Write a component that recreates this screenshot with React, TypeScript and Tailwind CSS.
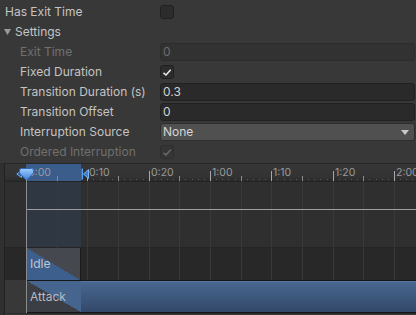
import type { ReactNode } from "react";

const STEP = 61.33;
const T0 = 21;
const LABELS = ["0:00", "0:10", "0:20", "1:00", "1:10", "1:20", "2:00"];
const px = (v: number) => Math.round(T0 + v);

function Check({ on, disabled }: { on?: boolean; disabled?: boolean }) {
  return (
    <div
      className={
        "flex h-[14px] w-[14px] items-center justify-center rounded-[3px] border " +
        (disabled ? "border-[#2e2e2e] bg-[#353535]" : "border-[#202020] bg-[#2c2c2c]")
      }
    >
      {on && (
        <svg width="10" height="9" viewBox="0 0 10 9">
          <polyline
            points="1.5,4.8 4,7 8.7,1.8"
            fill="none"
            stroke={disabled ? "#6a6a6a" : "#e8e8e8"}
            strokeWidth="1.6"
          />
        </svg>
      )}
    </div>
  );
}

function Field({ value, disabled }: { value: string; disabled?: boolean }) {
  return (
    <div
      className={
        "flex h-[18px] flex-1 items-center rounded-[3px] border px-[2px] " +
        (disabled
          ? "border-[#2c2c2c] bg-[#323232] text-[#6c6c6c]"
          : "border-[#212121] bg-[#2a2a2a] text-[#d2d2d2]")
      }
    >
      {value}
    </div>
  );
}

function Row({
  label,
  indent = true,
  disabled,
  children,
}: {
  label: ReactNode;
  indent?: boolean;
  disabled?: boolean;
  children?: ReactNode;
}) {
  return (
    <div className="flex h-5 items-center">
      <div
        className={
          "w-[160px] shrink-0 truncate " +
          (indent ? "pl-[20px] " : "pl-[5px] ") +
          (disabled ? "text-[#707070]" : "text-[#c4c4c4]")
        }
      >
        {label}
      </div>
      <div className="flex flex-1 items-center pr-[1px]">{children}</div>
    </div>
  );
}

function Ruler() {
  const small = Array.from({ length: 66 }, (_, i) => i * (STEP / 10));
  return (
    <div className="relative h-[18px] border-t border-[#262626] bg-[linear-gradient(to_bottom,#363636_0%,#333333_75%,#2a2a2a_100%)]">
      <div className="absolute top-0 bottom-0 left-[21px] w-[55px] bg-[#3b5d8c]" />
      {small.map((v, i) => (
        <div
          key={"s" + i}
          className="absolute bottom-[1px] h-px w-px bg-[#5c5c5c]"
          style={{ left: px(v) }}
        />
      ))}
      {LABELS.map((l, i) => (
        <div key={l}>
          <div
            className="absolute bottom-0 h-[10px] w-px bg-[#a8a8a8]"
            style={{ left: px(i * STEP) }}
          />
          <div
            className="absolute bottom-0 h-[5px] w-px bg-[#8a8a8a]"
            style={{ left: px(i * STEP + STEP / 2) }}
          />
          <div
            className="absolute top-[3px] text-[10.5px] leading-[12px] text-[#9a9a9a]"
            style={{ left: px(i * STEP) + 2 }}
          >
            {l}
          </div>
        </div>
      ))}
      {/* transition start marker */}
      <svg className="absolute top-[6px] left-[11px]" width="6" height="8" viewBox="0 0 6 8">
        <polygon points="5.5,0.5 0.8,4 5.5,7.5" fill="#2f5f9c" stroke="#6aa8f0" strokeWidth="1" />
      </svg>
      {/* transition end marker */}
      <svg className="absolute top-[4px] left-[76px]" width="8" height="12" viewBox="0 0 8 12">
        <rect x="0.5" y="0.5" width="1.5" height="11" fill="#5fa0ee" />
        <polygon points="2.5,6 7.5,1.5 7.5,10.5" fill="#3f7fd0" stroke="#7ab6f6" strokeWidth="1" />
      </svg>
      {/* playhead */}
      <svg className="absolute top-[4px] left-[14px]" width="15" height="13" viewBox="0 0 15 13">
        <defs>
          <linearGradient id="ph" x1="0" y1="0" x2="0" y2="1">
            <stop offset="0" stopColor="#9cccff" />
            <stop offset="1" stopColor="#3c7fd8" />
          </linearGradient>
        </defs>
        <path
          d="M2.5 0.5 H12.5 Q14.5 0.5 14.5 2.5 V5 L7.5 12.5 L0.5 5 V2.5 Q0.5 0.5 2.5 0.5 Z"
          fill="url(#ph)"
          stroke="#2f68b8"
          strokeWidth="1"
        />
      </svg>
    </div>
  );
}

export default function App() {
  const grid = Array.from({ length: 13 }, (_, i) => i * (STEP / 2)).slice(1);
  return (
    <div className="h-[315px] w-[416px] overflow-hidden bg-[#383838] font-['Inter',sans-serif] text-[12px]">
      <div className="pt-[2px]">
        <Row label="Has Exit Time" indent={false}>
          <Check />
        </Row>
        <div className="flex h-5 items-center text-[#c4c4c4]">
          <svg className="ml-[4px] mr-[4px]" width="7" height="6" viewBox="0 0 7 6">
            <polygon points="0,0 7,0 3.5,6" fill="#9a9a9a" />
          </svg>
          Settings
        </div>
        <Row label="Exit Time" disabled>
          <Field value="0" disabled />
        </Row>
        <Row label="Fixed Duration">
          <Check on />
        </Row>
        <Row label="Transition Duration (s)">
          <Field value="0.3" />
        </Row>
        <Row label="Transition Offset">
          <Field value="0" />
        </Row>
        <Row label="Interruption Source">
          <div className="flex h-[18px] flex-1 items-center justify-between rounded-[3px] border border-[#2e2e2e] bg-[#505050] pl-[2px] pr-[5px] text-[#d6d6d6]">
            None
            <svg width="8" height="5" viewBox="0 0 8 5">
              <polygon points="0,0 8,0 4,5" fill="#c8c8c8" />
            </svg>
          </div>
        </Row>
        <Row label="Ordered Interruption" disabled>
          <Check on disabled />
        </Row>
      </div>

      <div className="mt-px flex h-[152px]">
        <div className="w-[4px] shrink-0 bg-[#303030]" />
        <div className="relative flex-1 border-l border-[#222222]">
          <Ruler />
          <div className="relative h-[66px] border-t border-[#242424] bg-[#2f2f2f]">
            <div className="absolute top-0 bottom-0 left-[21px] w-[55px] bg-[#2f3742]" />
          </div>
          <div className="h-[33px] border-t border-[#242424] bg-[#282828]">
            <div className="relative z-10 ml-[22px] flex h-full w-[54px] items-center border-r border-[#1c1c1c] bg-[linear-gradient(to_top_right,#3d5f8e_50%,#45484e_50%)] pl-[3px] text-[#c0c4cc]">
              Idle
            </div>
          </div>
          <div className="relative z-10 ml-[22px] flex h-[33px] border-y border-[#161616]">
            <div className="flex w-[54px] shrink-0 items-center bg-[linear-gradient(to_top_right,#3b3e44_50%,#45648e_50%)] pl-[3px] text-[#b8bcc4]">
              Attack
            </div>
            <div className="flex-1 border-t border-[#56779f] bg-[linear-gradient(to_bottom,#48678f,#33486a)]" />
          </div>
          <div className="h-px bg-[#2b2b2b]" />

          {/* grid lines */}
          {grid.map((v, i) => (
            <div
              key={i}
              className="absolute top-[18px] h-[99px] w-px bg-[#393939]"
              style={{ left: px(v) }}
            />
          ))}
          <div className="absolute top-[46px] right-0 left-[21px] h-px bg-[#9e9e9e]" />
          <div className="absolute top-[17px] bottom-[2px] left-[21px] z-20 w-px bg-[#8c8c8c]" />
        </div>
      </div>
    </div>
  );
}
